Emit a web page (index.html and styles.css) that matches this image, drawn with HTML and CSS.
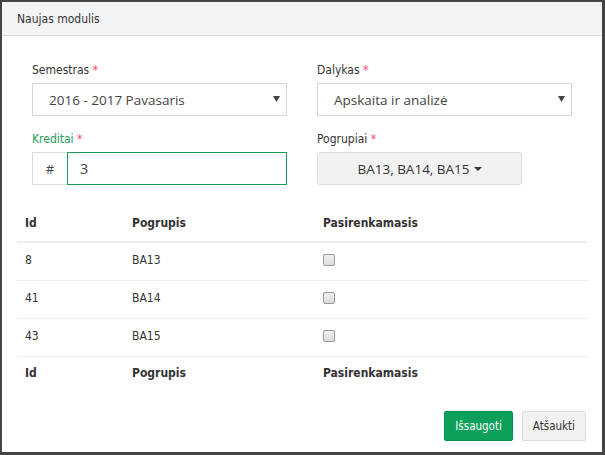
FILE: index.html
```html
<!DOCTYPE html>
<html lang="lt">
<head>
<meta charset="utf-8">
<title>Naujas modulis</title>
<link rel="stylesheet" href="styles.css">
</head>
<body>
<div class="modal">
  <div class="modal-header">Naujas modulis</div>
  <div class="modal-body">
    <div class="form-grid">
      <div class="form-group">
        <div class="label">Semestras <span class="req">*</span></div>
        <div class="select"><span>2016 - 2017 Pavasaris</span><svg class="arrow" width="7" height="6" viewBox="0 0 7 6"><path d="M0 0H7L3.5 6Z" fill="#444"/></svg></div>
      </div>
      <div class="form-group">
        <div class="label">Dalykas <span class="req">*</span></div>
        <div class="select"><span>Apskaita ir analizė</span><svg class="arrow" width="7" height="6" viewBox="0 0 7 6"><path d="M0 0H7L3.5 6Z" fill="#444"/></svg></div>
      </div>
      <div class="form-group">
        <div class="label label-ok">Kreditai <span class="req">*</span></div>
        <div class="input-group"><span class="addon">#</span><span class="input">3</span></div>
      </div>
      <div class="form-group">
        <div class="label">Pogrupiai <span class="req">*</span></div>
        <div class="dropdown-btn">BA13, BA14, BA15 <span class="caret"></span></div>
      </div>
    </div>
    <table class="table">
      <thead>
        <tr><th class="c-id">Id</th><th class="c-grp">Pogrupis</th><th>Pasirenkamasis</th></tr>
      </thead>
      <tbody>
        <tr><td>8</td><td>BA13</td><td><span class="checkbox"></span></td></tr>
        <tr><td>41</td><td>BA14</td><td><span class="checkbox"></span></td></tr>
        <tr><td>43</td><td>BA15</td><td><span class="checkbox"></span></td></tr>
      </tbody>
      <tfoot>
        <tr><th>Id</th><th>Pogrupis</th><th>Pasirenkamasis</th></tr>
      </tfoot>
    </table>
  </div>
  <div class="modal-footer">
    <button class="btn btn-success">Išsaugoti</button>
    <button class="btn btn-default">Atšaukti</button>
  </div>
</div>
</body>
</html>
```
FILE: styles.css
```css
html, body {
  margin: 0;
  padding: 0;
}
body {
  background: #444;
  padding: 2px;
  font-family: "DejaVu Sans Condensed", "DejaVu Sans", sans-serif;
  font-stretch: condensed;
  font-size: 12px;
  color: #333;
}
.modal {
  width: 600px;
  height: 450px;
  background: #fff;
  display: flex;
  flex-direction: column;
  box-sizing: border-box;
}
.modal-header {
  height: 33px;
  display: flex;
  align-items: center;
  padding: 0 15px;
  background: #f3f4f6;
  border-bottom: 1px solid #dcdcdc;
  font-size: 12px;
  color: #333;
}
.modal-body {
  padding: 26px 15px 0;
}
.form-grid {
  display: grid;
  grid-template-columns: 255px 255px;
  column-gap: 30px;
  row-gap: 15px;
  padding: 0 15px;
}
.label {
  line-height: 17px;
  margin-bottom: 4px;
  color: #333;
}
.label-ok {
  color: #1f9d5e;
}
.req {
  color: #f5506a;
}
.select {
  height: 33px;
  box-sizing: border-box;
  border: 1px solid #d3d7dc;
  display: flex;
  align-items: center;
  justify-content: space-between;
  padding: 0 6px 0 16px;
  font-family: "Open Sans", sans-serif;
  font-stretch: normal;
  font-size: 13.5px;
  color: #444;
}
.arrow {
  display: block;
  margin-top: -1px;
}
.input-group {
  display: flex;
  height: 33px;
}
.addon {
  width: 35px;
  box-sizing: border-box;
  border: 1px solid #dcdcdc;
  border-right: 0;
  display: flex;
  align-items: center;
  justify-content: center;
  font-family: "Open Sans", sans-serif;
  font-stretch: normal;
  font-size: 13px;
  color: #444;
}
.input {
  flex: 1;
  box-sizing: border-box;
  border: 1px solid #1a9d5a;
  display: flex;
  align-items: center;
  padding-left: 12px;
  font-family: "Open Sans", sans-serif;
  font-stretch: normal;
  font-size: 14.5px;
  color: #444;
}
.dropdown-btn {
  width: 205px;
  height: 33px;
  box-sizing: border-box;
  background: #f2f2f2;
  border: 1px solid #dcdcdc;
  border-radius: 3px;
  display: flex;
  align-items: center;
  justify-content: center;
  gap: 4px;
  font-family: "Open Sans", sans-serif;
  font-stretch: normal;
  font-size: 13.5px;
  color: #333;
}
.caret {
  width: 0;
  height: 0;
  border-left: 4px solid transparent;
  border-right: 4px solid transparent;
  border-top: 4px solid #333;
}
.table {
  width: 570px;
  border-collapse: collapse;
  margin-top: 20px;
}
.table th, .table td {
  text-align: left;
  padding: 9px 8px;
  line-height: 18px;
}
.table th {
  font-weight: bold;
}
.table thead th {
  border-bottom: 2px solid #eee;
}
.table td {
  padding: 8px 8px 11px;
  border-top: 1px solid #eee;
}
.table tbody tr:first-child td {
  border-top: 0;
}
.table tfoot th {
  border-top: 1px solid #eee;
  padding-top: 7px;
}
.c-id {
  width: 91px;
}
.c-grp {
  width: 175px;
}
.checkbox {
  display: block;
  width: 12px;
  height: 12px;
  box-sizing: border-box;
  border: 1px solid #9a9a9a;
  border-radius: 2px;
  background: linear-gradient(#f0f0f0, #dcdcdc);
}
.modal-footer {
  margin-top: auto;
  display: flex;
  justify-content: flex-end;
  gap: 9px;
  padding: 0 16px 11px;
}
.btn {
  height: 30px;
  padding: 0 10px;
  border-radius: 2px;
  font-family: "DejaVu Sans Condensed", "DejaVu Sans", sans-serif;
  font-stretch: condensed;
  font-size: 11.5px;
  cursor: pointer;
}
.btn-success {
  background: #0ea05a;
  border: 1px solid #0c9050;
  color: #fff;
}
.btn-default {
  background: #f2f2f2;
  border: 1px solid #dcdcdc;
  color: #333;
}
```
